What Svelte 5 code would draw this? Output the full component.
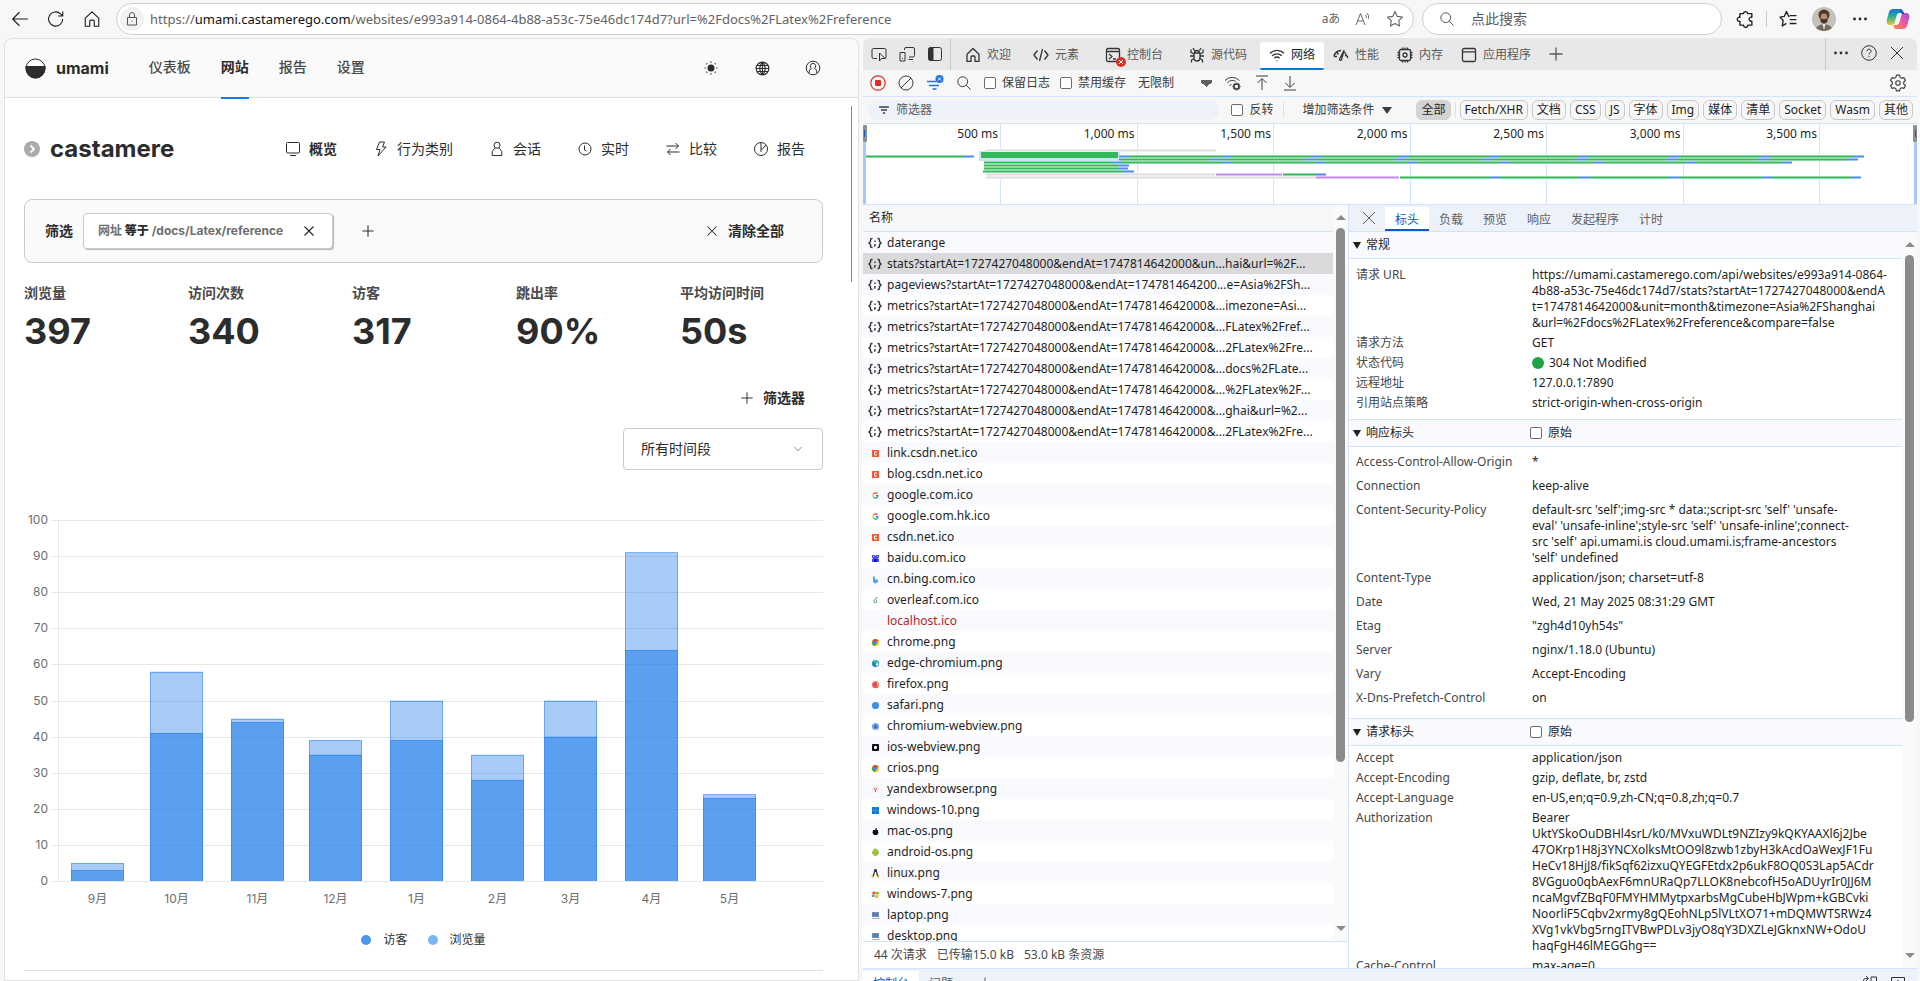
<script lang="ts">
  interface HeaderRow {
    name: string;
    value: string;
    ok?: boolean;
  }

  interface RequestRow {
    name: string;
    icon: string;
  }

  // Stroke icons, all drawn on a 16x16 grid.
  const icons: Record<string, string[]> = {
    back: ['M15 8H1.5M7.5 2 1.5 8l6 6'],
    reload: ['M14 8a6.3 6.3 0 1 1-2-4.6L14 5.3M14 1.3v4h-4'],
    home: ['M2 7.2 8 1.6l6 5.6v7.2h-4V10a1 1 0 0 0-1-1H7a1 1 0 0 0-1 1v4.4H2z'],
    lock: ['M3.5 6.5h9v7.5h-9zM5.5 6.5V4a2.5 2.5 0 0 1 5 0v2.5M8 9.7v1'],
    star: ['M8 1.4l2 4.3 4.7.6-3.4 3.2.8 4.7L8 11.9l-4.1 2.3.8-4.7L1.3 6.3 6 5.7z'],
    search: ['M6.7 1.8a4.9 4.9 0 1 0 0 9.8 4.9 4.9 0 0 0 0-9.8zM10.3 10.3l4.3 4.3'],
    puzzle: [
      'M5.8 3.2a1.8 1.8 0 1 1 3.6 0h3.8v3.3a1.8 1.8 0 1 0 0 3.4v3.6H9.6a1.9 1.9 0 1 1-3.8 0H2.6V10a1.8 1.8 0 1 1 0-3.4V3.2z',
    ],
    favs: ['M9 6.2 6.6 1.4 4.7 5.7.9 6.3l2.8 3.1-.8 4.8 3.7-2.3M9.5 5h6M9.5 8.5h6M9.5 12h6'],
    close: ['M2 2l12 12M14 2 2 14'],
    plus: ['M8 1.5v13M1.5 8h13'],
    chevron: ['M3 5l5 5.5L13 5'],
    globe: [
      'M8 1.2a6.8 6.8 0 1 0 0 13.6A6.8 6.8 0 0 0 8 1.2zM8 1.2c-4 4-4 9.6 0 13.6 4-4 4-9.6 0-13.6zM1.2 8h13.6M2 4.8h12M2 11.2h12M8 1.2v13.6',
    ],
    user: [
      'M8 1.2a6.8 6.8 0 1 0 0 13.6A6.8 6.8 0 0 0 8 1.2z',
      'M8 3.4a2.7 2.7 0 0 0-1.4 5C4.8 9 4.2 10.5 4 13M8 3.4a2.7 2.7 0 0 1 1.4 5c1.8.6 2.4 2.1 2.6 4.6',
    ],
    monitor: ['M2.5 1.5h11a1 1 0 0 1 1 1V11a1 1 0 0 1-1 1h-11a1 1 0 0 1-1-1V2.5a1 1 0 0 1 1-1zM5 14.5h6'],
    bolt: ['M6.5 1h5l-2 5H13L5 15l2-6.5H3.5z'],
    person: ['M8 1.2a3 3 0 1 0 0 6 3 3 0 0 0 0-6zM6 7l-2.8 3.5v4h9.6v-4L10 7'],
    clock: ['M8 2a6 6 0 1 0 0 12A6 6 0 0 0 8 2zM7.5 4.5V9l2 1'],
    swap: ['M1.5 5h12M10.5 2l3 3-3 3M14.5 11h-12M5.5 8l-3 3 3 3'],
    pie: ['M8 1.5a6.5 6.5 0 1 0 0 13 6.5 6.5 0 0 0 0-13zM8 1.5V8h1.5L13 4M8 8v3'],
    inspect: [
      'M6 12.5H2.5A1.5 1.5 0 0 1 1 11V4a1.5 1.5 0 0 1 1.5-1.5h11A1.5 1.5 0 0 1 15 4v7a1.5 1.5 0 0 1-1.5 1.5',
      'M8.5 7v8l2-2.5H14z',
    ],
    devices: ['M5.5 4V3A1.5 1.5 0 0 1 7 1.5h7A1.5 1.5 0 0 1 15.5 3v6.5A1.5 1.5 0 0 1 14 11h-4M1 6.5h5V15H1zM3 12.5h1M9.5 13.5H14'],
    code: ['M4.500 3.500 1 8l3.500 4.500M11.500 3.500 15 8l-3.500 4.500M9.500 2l-3 12'],
    console: [
      'M3 1.5h10A1.5 1.5 0 0 1 14.5 3v10a1.5 1.5 0 0 1-1.5 1.5H3A1.5 1.5 0 0 1 1.5 13V3A1.5 1.5 0 0 1 3 1.5zM1.5 4.5h13',
      'M4 7l3 2.5L4 12M8 12h3',
    ],
    bug: [
      'M5 6h6v5a3 3 0 0 1-6 0zM5.5 6a2.500 2.500 0 0 1 5 0M5.500 3.500 4 1M10.500 3.500 12 1',
      'M5 9H1M11 9h4M5 7 2 5.500v-3M11 7l3-1.500v-3M5 11.500 2.500 13v2.500M11 11.500l2.500 1.500v2.500',
    ],
    wifi: ['M1 6.3a10 10 0 0 1 14 0M3.200 8.800a7 7 0 0 1 9.600 0M5.400 11.200a3.800 3.800 0 0 1 5.200 0M8 13.500v.8'],
    gauge: ['M1 9.500A7.500 7.500 0 0 1 8 3.500M11.500 5l3.500 6M1 9.500h3M6.500 12 11 3.500l-2.500 9a1 1 0 0 1-2-.5zM4 5.500l1.500 2M12 8.500l3 1'],
    chip: [
      'M4 2.5h8A1.5 1.5 0 0 1 13.5 4v8a1.5 1.5 0 0 1-1.5 1.5H4A1.5 1.5 0 0 1 2.5 12V4A1.5 1.5 0 0 1 4 2.5zM8 6a2 2 0 1 0 0 4 2 2 0 0 0 0-4z',
      'M5.5.5v2M8 .5v2M10.5.5v2M5.5 13.5v2M8 13.5v2M10.5 13.5v2M.5 5.5h2M.5 8h2M.5 10.5h2M13.5 5.5h2M13.5 8h2M13.5 10.5h2',
    ],
    window: ['M3 1.5h10A1.5 1.5 0 0 1 14.5 3v10a1.5 1.5 0 0 1-1.5 1.5H3A1.5 1.5 0 0 1 1.5 13V3A1.5 1.5 0 0 1 3 1.5zM1.5 4.8h13'],
    clear: ['M8 1a7 7 0 1 0 0 14A7 7 0 0 0 8 1zM13 3 3 13'],
    upload: ['M2 1h12M8 15V4M3.5 8 8 3.5 12.5 8'],
    download: ['M2 15h12M8 1v11M3.5 8 8 12.5 12.5 8'],
    funnel: ['M1.5 4h13M4 8h8M6.5 12h3'],
    gear: [
      'M6.6 1h2.8l.5 2 1.3.8 2-.6 1.4 2.4-1.5 1.5v1.8l1.5 1.5-1.4 2.4-2-.6-1.3.8-.5 2H6.6l-.5-2-1.3-.8-2 .6-1.4-2.4 1.5-1.500V7.100L1.400 5.600l1.400-2.400 2 .6L6.100 3z',
      'M8 6a2 2 0 1 0 0 4 2 2 0 0 0 0-4z',
    ],
    dock: ['M1.5 9V5.500a2 2 0 0 1 2-2H6M4 1l2.500 2.500L4 6', 'M9 2v12h5.500V2z'],
    expand: ['M1.5 2.5h13v12h-13zM8 11V5.5M5.5 8 8 5.5 10.5 8'],
  };

  const siteNav = ['仪表板', '网站', '报告', '设置'];
  const siteTabs = [
    { icon: 'monitor', label: '概览' },
    { icon: 'bolt', label: '行为类别' },
    { icon: 'person', label: '会话' },
    { icon: 'clock', label: '实时' },
    { icon: 'swap', label: '比较' },
    { icon: 'pie', label: '报告' },
  ];
  const metrics = [
    { label: '浏览量', value: '397' },
    { label: '访问次数', value: '340' },
    { label: '访客', value: '317' },
    { label: '跳出率', value: '90%' },
    { label: '平均访问时间', value: '50s' },
  ];

  // Bars sit on a time axis, so months are not evenly spaced.
  const months = [
    { label: '9月', x: 47, visitors: 3, views: 5 },
    { label: '10月', x: 126, visitors: 41, views: 58 },
    { label: '11月', x: 207, visitors: 44, views: 45 },
    { label: '12月', x: 285, visitors: 35, views: 39 },
    { label: '1月', x: 366, visitors: 39, views: 50 },
    { label: '2月', x: 447, visitors: 28, views: 35 },
    { label: '3月', x: 520, visitors: 40, views: 50 },
    { label: '4月', x: 601, visitors: 64, views: 91 },
    { label: '5月', x: 679, visitors: 23, views: 24 },
  ];
  const ticks = [0, 10, 20, 30, 40, 50, 60, 70, 80, 90, 100];
  const BAR_W = 53;
  const BASE = 373;
  const yOf = (v: number) => BASE - v * 3.61;

  const devTabs = [
    { icon: 'home', label: '欢迎', wide: false },
    { icon: 'code', label: '元素', wide: true },
    { icon: 'console', label: '控制台', wide: true },
    { icon: 'bug', label: '源代码', wide: true },
    { icon: 'wifi', label: '网络', wide: false },
    { icon: 'gauge', label: '性能', wide: false },
    { icon: 'chip', label: '内存', wide: false },
    { icon: 'window', label: '应用程序', wide: false },
  ];
  const types = ['Fetch/XHR', '文档', 'CSS', 'JS', '字体', 'Img', '媒体', '清单', 'Socket', 'Wasm', '其他'];

  const marks = [500, 1000, 1500, 2000, 2500, 3000, 3500].map((ms, i) => ({
    x: 137 + i * 136.5,
    label: `${ms.toLocaleString('en-US')} ms`,
  }));

  // [core, halo] colour of each activity kind
  const GREEN = ['#34b95a', '#8fd9a4'];
  const BLUE = ['#4d8bf0', '#a3c4fa'];
  const VIOLET = ['#c58af9', '#e0c0fc'];
  const GREY = ['#dedede', '#ededed'];

  type Span = [number, number, number, string[]];

  // One connection lane: green run, with blue download pieces in it.
  function lane(y: number, from: number, blues: number[], width = 10): Span[] {
    const end = blues[blues.length - 1] + width;
    return [[y, from, end, GREEN], ...blues.map((b): Span => [y, b, b + width, BLUE])];
  }

  const spans: Span[] = [
    ...lane(32, 2, [101]),
    [26, 122, 353, GREY],
    ...lane(32, 256, [256, 359, 448, 536, 627, 716, 807, 898, 991]),
    ...lane(35, 256, [347, 441, 530, 619, 712, 803, 894, 985]),
    ...lane(38, 121, [249, 359, 453, 544, 636, 730, 822, 919]),
    ...lane(41, 121, [256]),
    ...lane(44, 121, [255]),
    ...lane(47, 120, [261]),
    [50, 123, 352, GREY],
    [50, 353, 419, VIOLET],
    [50, 420, 453, GREEN],
    [50, 453, 463, BLUE],
    [53, 123, 453, GREY],
    [53, 453, 536, VIOLET],
    ...lane(53, 537, [627, 716, 807, 898, 988]),
  ];

  const requests: RequestRow[] = [
    { name: 'daterange', icon: 'json' },
    { name: 'stats?startAt=1727427048000&endAt=1747814642000&un...hai&url=%2F...', icon: 'json' },
    { name: 'pageviews?startAt=1727427048000&endAt=174781464200...e=Asia%2FSh...', icon: 'json' },
    { name: 'metrics?startAt=1727427048000&endAt=1747814642000&...imezone=Asi...', icon: 'json' },
    { name: 'metrics?startAt=1727427048000&endAt=1747814642000&...FLatex%2Fref...', icon: 'json' },
    { name: 'metrics?startAt=1727427048000&endAt=1747814642000&...2FLatex%2Fre...', icon: 'json' },
    { name: 'metrics?startAt=1727427048000&endAt=1747814642000&...docs%2FLate...', icon: 'json' },
    { name: 'metrics?startAt=1727427048000&endAt=1747814642000&...%2FLatex%2F...', icon: 'json' },
    { name: 'metrics?startAt=1727427048000&endAt=1747814642000&...ghai&url=%2...', icon: 'json' },
    { name: 'metrics?startAt=1727427048000&endAt=1747814642000&...2FLatex%2Fre...', icon: 'json' },
    { name: 'link.csdn.net.ico', icon: 'csdn' },
    { name: 'blog.csdn.net.ico', icon: 'csdn' },
    { name: 'google.com.ico', icon: 'google' },
    { name: 'google.com.hk.ico', icon: 'google' },
    { name: 'csdn.net.ico', icon: 'csdn' },
    { name: 'baidu.com.ico', icon: 'baidu' },
    { name: 'cn.bing.com.ico', icon: 'bing' },
    { name: 'overleaf.com.ico', icon: 'overleaf' },
    { name: 'localhost.ico', icon: 'failed' },
    { name: 'chrome.png', icon: 'chrome' },
    { name: 'edge-chromium.png', icon: 'edge' },
    { name: 'firefox.png', icon: 'firefox' },
    { name: 'safari.png', icon: 'safari' },
    { name: 'chromium-webview.png', icon: 'chromium' },
    { name: 'ios-webview.png', icon: 'ios' },
    { name: 'crios.png', icon: 'chrome' },
    { name: 'yandexbrowser.png', icon: 'yandex' },
    { name: 'windows-10.png', icon: 'win10' },
    { name: 'mac-os.png', icon: 'mac' },
    { name: 'android-os.png', icon: 'android' },
    { name: 'linux.png', icon: 'linux' },
    { name: 'windows-7.png', icon: 'win7' },
    { name: 'laptop.png', icon: 'screen' },
    { name: 'desktop.png', icon: 'screen' },
  ];

  const general: HeaderRow[] = [
    {
      name: '请求 URL',
      value:
        'https://umami.castamerego.com/api/websites/e993a914-0864-\n4b88-a53c-75e46dc174d7/stats?startAt=1727427048000&endA\nt=1747814642000&unit=month&timezone=Asia%2FShanghai\n&url=%2Fdocs%2FLatex%2Freference&compare=false',
    },
    { name: '请求方法', value: 'GET' },
    { name: '状态代码', value: '304 Not Modified', ok: true },
    { name: '远程地址', value: '127.0.0.1:7890' },
    { name: '引用站点策略', value: 'strict-origin-when-cross-origin' },
  ];
  const response: HeaderRow[] = [
    { name: 'Access-Control-Allow-Origin', value: '*' },
    { name: 'Connection', value: 'keep-alive' },
    {
      name: 'Content-Security-Policy',
      value:
        "default-src 'self';img-src * data:;script-src 'self' 'unsafe-\neval' 'unsafe-inline';style-src 'self' 'unsafe-inline';connect-\nsrc 'self' api.umami.is cloud.umami.is;frame-ancestors\n'self' undefined",
    },
    { name: 'Content-Type', value: 'application/json; charset=utf-8' },
    { name: 'Date', value: 'Wed, 21 May 2025 08:31:29 GMT' },
    { name: 'Etag', value: '"zgh4d10yh54s"' },
    { name: 'Server', value: 'nginx/1.18.0 (Ubuntu)' },
    { name: 'Vary', value: 'Accept-Encoding' },
    { name: 'X-Dns-Prefetch-Control', value: 'on' },
  ];
  const request: HeaderRow[] = [
    { name: 'Accept', value: 'application/json' },
    { name: 'Accept-Encoding', value: 'gzip, deflate, br, zstd' },
    { name: 'Accept-Language', value: 'en-US,en;q=0.9,zh-CN;q=0.8,zh;q=0.7' },
    {
      name: 'Authorization',
      value:
        'Bearer\nUktYSkoOuDBHl4srL/k0/MVxuWDLt9NZIzy9kQKYAAXl6j2Jbe\n47OKrp1H8j3YNCXolksMtOO9l8zwb1zbyH3kAcdOaWexJF1Fu\nHeCv18HjJ8/fikSqf62izxuQYEGFEtdx2p6ukF8OQ0S3Lap5ACdr\n8VGguo0qbAexF6mnURaQp7LLOK8nebcofH5oADUyrIr0JJ6M\nncaMgvfZBqF0FMYHMMytpxarbsMgCubeHbJWpm+kGBCvki\nNoorliF5Cqbv2xrmy8gQEohNLp5lVLtXO71+mDQMWTSRWz4\nXVg1vkVbg5rngITVBwPDLv3jyO8qY3DXZLeJGknxNW+OdoU\nhaqFgH46lMEGGhg==',
    },
    { name: 'Cache-Control', value: 'max-age=0' },
  ];
  const sections = [
    { title: '常规', rows: general, raw: false, kind: 'general' },
    { title: '响应标头', rows: response, raw: true, kind: 'response' },
    { title: '请求标头', rows: request, raw: true, kind: 'request' },
  ];
  const detailTabs = ['标头', '负载', '预览', '响应', '发起程序', '计时'];

  let selected = $state(1);
  let range = $state('all');
</script>

{#snippet icon(name: string, size = 16, weight = 1)}
  <svg class="icon" width={size} height={size} viewBox="0 0 16 16" stroke-width={weight} aria-hidden="true">
    {#each icons[name] as d (d)}
      <path {d}></path>
    {/each}
  </svg>
{/snippet}

{#snippet dots()}
  <svg width="16" height="16" viewBox="0 0 16 16" fill="currentColor" aria-hidden="true">
    <circle cx="2.5" cy="8" r="1.4"></circle>
    <circle cx="8" cy="8" r="1.4"></circle>
    <circle cx="13.5" cy="8" r="1.4"></circle>
  </svg>
{/snippet}

{#snippet fileIcon(kind: string)}
  <svg class="file" width="14" height="14" viewBox="0 0 14 14" aria-hidden="true">
    {#if kind === 'json'}
      <g fill="none" stroke="#333" stroke-width="1.4">
        <path d="M4.5 2.500h-.7q-1.300 0-1.300 1.500v1.500L1 7l1.500 1.500V10q0 1.500 1.300 1.500h.7M9.500 2.500h.7q1.300 0 1.300 1.500v1.500L13 7l-1.500 1.500V10q0 1.500-1.300 1.500h-.7"></path>
        <path d="M7 4.500V6M7 8v1.500l-.7 1.200"></path>
      </g>
    {:else if kind === 'csdn'}
      <rect x="4" y="4" width="7" height="7" fill="#fc5531"></rect>
      <path d="M9 6H6.500v3H9" fill="none" stroke="#fff"></path>
    {:else if kind === 'google'}
      <g fill="none" stroke-width="1.300">
        <path d="M9.500 5.700A2.500 2.500 0 0 0 5.500 6" stroke="#ea4335"></path>
        <path d="M5.500 6a2.500 2.500 0 0 0 0 3" stroke="#fbbc05"></path>
        <path d="M5.500 9A2.500 2.500 0 0 0 9 9.600" stroke="#34a853"></path>
        <path d="M9 9.600a2.500 2.500 0 0 0 1-2H7.700" stroke="#4285f4"></path>
      </g>
    {:else if kind === 'baidu'}
      <rect x="4" y="4" width="7" height="7" fill="#4a4af7"></rect>
      <path d="M5 5h1v1H5zM9 5h1v1H9zM7 4h1v1H7zM4 7h1v1H4zM10 7h1v1h-1z" fill="#c9c9ff"></path>
      <path d="M6 8h3v3H6z" fill="#1616c8"></path>
    {:else if kind === 'bing'}
      <path d="M5 4l2 1v2l3 1v2l-3 1.5L5 10z" fill="#4ba5e8"></path>
    {:else if kind === 'overleaf'}
      <path d="M9.500 4.500q-2 0-2.300 2M7.500 6.800a1.500 1.500 0 1 0 1.300 1.500q0-1-1-1.500" fill="none" stroke="#5f9b76"></path>
    {:else if kind === 'chrome'}
      <circle cx="7.5" cy="7.5" r="3.5" fill="#fbc116"></circle>
      <path d="M7.500 7.500 4.300 6a3.500 3.500 0 0 1 6.200-.3z" fill="#e33b2e"></path>
      <path d="M7.500 7.500 4.300 6a3.500 3.500 0 0 0 3.200 5z" fill="#2da94f"></path>
      <circle cx="7.5" cy="7.5" r="1.5" fill="#4285f4"></circle>
    {:else if kind === 'edge'}
      <circle cx="7.5" cy="7.5" r="3.5" fill="#1584cf"></circle>
      <path d="M5 5a3.500 3.500 0 0 1 6 2.500H8z" fill="#44c98a"></path>
      <circle cx="9" cy="8.5" r="1.2" fill="#fff"></circle>
    {:else if kind === 'firefox'}
      <circle cx="7.5" cy="7.7" r="3.5" fill="#ff5a4a"></circle>
      <path d="M9 4l2 2.500v2L9 9z" fill="#ffb52e"></path>
      <circle cx="7.500" cy="7.500" r="1.300" fill="#8f43d6"></circle>
    {:else if kind === 'safari'}
      <circle cx="7.5" cy="7.5" r="3.5" fill="#2f8de4"></circle>
      <circle cx="7.5" cy="7.5" r="2" fill="#4a90dd"></circle>
    {:else if kind === 'chromium'}
      <circle cx="7.5" cy="7.5" r="3.5" fill="#6ba0ef"></circle>
      <circle cx="7.5" cy="7.5" r="1.5" fill="#2f66c5"></circle>
    {:else if kind === 'ios'}
      <rect x="4" y="4" width="7" height="7" rx="1" fill="#111"></rect>
      <rect x="6" y="6" width="3" height="3" rx="1" fill="#fff"></rect>
    {:else if kind === 'yandex'}
      <circle cx="7.5" cy="7.5" r="3.5" fill="#f3eeee"></circle>
      <path d="M6 6l1.500 2L9 6M7.500 8v2" fill="none" stroke="#e05252"></path>
    {:else if kind === 'win10'}
      <path d="M4 4h7v7H4z" fill="#0a7bd6"></path>
      <path d="M7.500 4v7M4 7.500h7" stroke="#5aa9e6" stroke-width=".5"></path>
    {:else if kind === 'mac'}
      <path d="M5 6h2l1-2h1l-.5 2H10v1.500l.5 1.500L9 11H6L4.500 9z" fill="#111"></path>
    {:else if kind === 'android'}
      <path d="M5 6a2.500 2.500 0 0 1 5 0l1 .5v2l-1 1L8.500 11h-2L5 9.500l-1-1v-2z" fill="#9bc24a"></path>
    {:else if kind === 'linux'}
      <path d="M6.500 3h2l1 4 1 3h-6l1-3z" fill="#333"></path>
      <path d="M7 6h1l1 4H6z" fill="#fff"></path>
      <path d="M4 9.500 6 11H4zM11 9.500 9 11h2z" fill="#e8b33c" stroke="#e8b33c"></path>
    {:else if kind === 'win7'}
      <path d="M5 4.500h2.500V7H4z" fill="#f0552b"></path>
      <path d="M8 5h3l-.5 2.500h-3z" fill="#80bb2d"></path>
      <path d="M4 7.500h3L6.500 10H4z" fill="#33a3e8"></path>
      <path d="M7.500 8h3L10 11H7z" fill="#f7bc1e"></path>
    {:else if kind === 'screen'}
      <rect x="4.500" y="4.500" width="6" height="4" fill="#4b7fd6" stroke="#7d8aa5"></rect>
      <path d="M4 10.500h7" stroke="#aab" fill="none"></path>
    {/if}
  </svg>
{/snippet}

<div class="browser">
  <header class="chrome">
    <button class="tool" aria-label="返回">{@render icon('back', 18)}</button>
    <button class="tool" aria-label="刷新">{@render icon('reload', 18)}</button>
    <button class="tool" aria-label="主页">{@render icon('home', 18)}</button>
    <div class="address">
      <span class="lock">{@render icon('lock')}</span>
      <div class="url" role="textbox" tabindex="0" aria-label="地址栏">
        https://<b>umami.castamerego.com</b>/websites/e993a914-0864-4b88-a53c-75e46dc174d7?url=%2Fdocs%2FLatex%2Freference
      </div>
      <button class="mini translate" aria-label="翻译">aあ</button>
      <button class="mini" aria-label="大声朗读">
        <svg class="icon" width="16" height="16" viewBox="0 0 16 16" aria-hidden="true">
          <path d="M1 14 5.500 2.500 10 14M2.700 10h5.600M10.500 4a3 3 0 0 1 .8 3M12 2a6 6 0 0 1 1.500 5.500"></path>
        </svg>
      </button>
      <button class="mini" aria-label="收藏">{@render icon('star', 18)}</button>
    </div>
    <label class="search">
      {@render icon('search')}
      <input type="search" placeholder="点此搜索" aria-label="点此搜索" />
    </label>
    <div class="extras">
      <button class="tool" aria-label="扩展">{@render icon('puzzle', 18, 1.2)}</button>
      <span class="rule"></span>
      <button class="tool" aria-label="收藏夹">{@render icon('favs', 18, 1.2)}</button>
      <button class="tool" aria-label="个人资料">
        <svg width="24" height="24" viewBox="0 0 24 24" aria-hidden="true">
          <circle cx="12" cy="12" r="12" fill="#c3c1b9"></circle>
          <path d="M4 21a9 7 0 0 1 16 0A12 12 0 0 1 4 21z" fill="#756d5e"></path>
          <path d="M10 15l2 8 2-8z" fill="#ece8df"></path>
          <circle cx="12" cy="8" r="5.5" fill="#4c382c"></circle>
          <ellipse cx="12" cy="10.5" rx="3.4" ry="4" fill="#b98a72"></ellipse>
          <path d="M8.500 11.500q3.500 1.500 7 0v3q-3.500 4.500-7 0z" fill="#48352a"></path>
        </svg>
      </button>
      <button class="tool" aria-label="更多">{@render dots()}</button>
      <button class="tool" aria-label="Copilot">
        <svg width="24" height="24" viewBox="0 0 24 24" aria-hidden="true">
          <defs>
            <linearGradient id="cop-a" x1="0" y1="0" x2="0" y2="1">
              <stop offset="0" stop-color="#1673e0"></stop>
              <stop offset=".5" stop-color="#2bb38c"></stop>
              <stop offset="1" stop-color="#f2c62b"></stop>
            </linearGradient>
            <linearGradient id="cop-b" x1="1" y1="0" x2="0" y2="1">
              <stop offset="0" stop-color="#9b4ef0"></stop>
              <stop offset=".5" stop-color="#ee5a9c"></stop>
              <stop offset="1" stop-color="#fb8a36"></stop>
            </linearGradient>
          </defs>
          <path d="M7.500 2H14c2 0 2 2 2.500 4h-3c-2 0-2.500 1.500-3 3l-2 7c-.5 1.500-1 2-2.500 2H4c-3 0-4-2.500-3-6l2-7c.7-2 2-3 4.500-3z" fill="url(#cop-a)"></path>
          <path d="M16.500 22H10c-2 0-2-2-2.500-4h3c2 0 2.500-1.500 3-3l2-7c.5-1.500 1-2 2.500-2h2c3 0 4 2.500 3 6l-2 7c-.7 2-2 3-4.500 3z" fill="url(#cop-b)"></path>
          <path d="M14 3c1.700 0 2 1.300 2.500 3H18" fill="none" stroke="#1752b8" stroke-width="2"></path>
        </svg>
      </button>
    </div>
  </header>

  <div class="panes">
    <main class="site">
      <nav class="site-nav">
        <a class="brand" href="/">
          <svg width="21" height="21" viewBox="0 0 21 21" aria-hidden="true">
            <circle cx="10.5" cy="10.5" r="9.500" fill="#fff" stroke="#2c2c2c"></circle>
            <path d="M.5 8h20v2.500a10 10 0 0 1-20 0z" fill="#2c2c2c"></path>
          </svg>
          umami
        </a>
        <div class="links">
          {#each siteNav as label (label)}
            <a href="/" class:active={label === '网站'}>{label}</a>
          {/each}
        </div>
        <div class="site-tools">
          <button aria-label="主题">
            <svg width="14" height="14" viewBox="0 0 16 16" aria-hidden="true">
              <circle cx="8" cy="8" r="4" fill="#2c2c2c"></circle>
              <path
                d="M8 .5V2M8 14v1.500M.5 8H2M14 8h1.500M2.700 2.700l1 1M12.300 12.300l1 1M13.300 2.700l-1 1M3.700 12.300l-1 1"
                stroke="#2c2c2c"
                stroke-width="1.400"
              ></path>
            </svg>
          </button>
          <button aria-label="语言">{@render icon('globe', 15, 1.2)}</button>
          <button aria-label="账户">{@render icon('user', 16)}</button>
        </div>
      </nav>

      <div class="site-body">
        <div class="site-head">
          <svg width="16" height="16" viewBox="0 0 16 16" aria-hidden="true">
            <circle cx="8" cy="8" r="8" fill="#ababab"></circle>
            <path d="M6.500 4.500 10 8l-3.500 3.500" fill="none" stroke="#fff" stroke-width="1.800"></path>
          </svg>
          <h1>castamere</h1>
          <div class="site-tabs">
            {#each siteTabs as tab, i (tab.icon)}
              <a href="/" class:active={i === 0}>{@render icon(tab.icon)}{tab.label}</a>
            {/each}
          </div>
        </div>

        <div class="filters">
          <span>筛选</span>
          <div class="tag">
            <span>网址 <b>等于</b> /docs/Latex/reference</span>
            <button aria-label="移除">{@render icon('close', 12, 1.6)}</button>
          </div>
          <button class="add" aria-label="添加筛选">{@render icon('plus', 14, 1.2)}</button>
          <button class="clear">{@render icon('close', 12, 1.4)}清除全部</button>
        </div>

        <dl class="metrics">
          {#each metrics as m (m.label)}
            <div>
              <dt>{m.label}</dt>
              <dd>{m.value}</dd>
            </div>
          {/each}
        </dl>

        <div class="controls">
          <button class="filter-btn">{@render icon('plus', 14, 1.1)}筛选器</button>
          <div class="range">
            <select bind:value={range} aria-label="时间范围">
              <option value="all">所有时间段</option>
              <option value="day">今天</option>
            </select>
            {@render icon('chevron', 12, 1.3)}
          </div>
        </div>

        <svg class="chart" viewBox="0 0 799 400" role="img" aria-label="访客与浏览量">
          {#each ticks as t (t)}
            <line x1="27" x2="799" y1={Math.round(yOf(t)) + 0.5} y2={Math.round(yOf(t)) + 0.5} class="grid"></line>
            <text x="24" y={yOf(t) + 4} text-anchor="end">{t}</text>
          {/each}
          <line x1="34.5" x2="34.5" y1="12" y2={BASE} class="grid"></line>
          {#each months as m (m.label)}
            <rect x={m.x} y={yOf(m.views)} width={BAR_W} height={BASE - yOf(m.views)} class="views"></rect>
            <rect x={m.x} y={yOf(m.visitors)} width={BAR_W} height={BASE - yOf(m.visitors)} class="visitors"></rect>
            <path
              class="edge"
              d="M{m.x + 0.5} {BASE}V{Math.round(yOf(m.views)) + 0.5}h{BAR_W - 1}V{BASE}M{m.x} {Math.round(yOf(m.visitors)) + 0.5}h{BAR_W}"
            ></path>
            <text x={m.x + BAR_W / 2} y="395" text-anchor="middle">{m.label}</text>
          {/each}
        </svg>

        <ul class="legend">
          <li><i class="dot dark"></i>访客</li>
          <li><i class="dot"></i>浏览量</li>
        </ul>
      </div>
      <span class="site-scroll"></span>
    </main>

    <aside class="devtools">
      <div class="dev-tabs">
        <div class="dev-modes">
          <button aria-label="选择元素">{@render icon('inspect')}</button>
          <button aria-label="设备模拟">{@render icon('devices')}</button>
          <button aria-label="停靠">
            <svg class="icon" width="16" height="16" viewBox="0 0 16 16" aria-hidden="true">
              <rect x="1.5" y="1.5" width="13" height="13" rx="2"></rect>
              <path d="M2 2h4v12H2z" fill="currentColor"></path>
            </svg>
          </button>
        </div>
        {#each devTabs as tab (tab.icon)}
          <button class="dev-tab" class:wide={tab.wide} class:active={tab.icon === 'wifi'}>
            <span class="tab-icon">
              {@render icon(tab.icon, 16, 1.3)}
              {#if tab.icon === 'console'}
                <svg class="badge" width="10" height="10" viewBox="0 0 10 10" aria-hidden="true">
                  <circle cx="5" cy="5" r="5" fill="#d9302a"></circle>
                  <path d="M3 3l4 4M7 3 3 7" stroke="#fff"></path>
                </svg>
              {/if}
            </span>
            {tab.label}
          </button>
        {/each}
        <button class="more" aria-label="更多工具">{@render icon('plus', 16, 1.3)}</button>
        <div class="dev-end">
          <button aria-label="自定义">{@render dots()}</button>
          <button aria-label="帮助">
            <svg class="icon" width="16" height="16" viewBox="0 0 16 16" aria-hidden="true">
              <circle cx="8" cy="8" r="7.300"></circle>
              <path d="M6 6.200a2 2 0 1 1 3 1.700c-.7.5-1 .8-1 1.600M8 11v1.200"></path>
            </svg>
          </button>
          <button aria-label="关闭">{@render icon('close')}</button>
        </div>
      </div>

      <div class="toolbar">
        <button aria-label="停止录制">
          <svg width="16" height="16" viewBox="0 0 16 16" aria-hidden="true">
            <circle cx="8" cy="8" r="7.2" fill="none" stroke="#d9302a" stroke-width="1.200"></circle>
            <rect x="5" y="5" width="6" height="6" rx="1" fill="#d9302a"></rect>
          </svg>
        </button>
        <button aria-label="清除">{@render icon('clear')}</button>
        <button aria-label="筛选">
          <svg width="18" height="16" viewBox="0 0 18 16" aria-hidden="true">
            <path d="M1 6.500h9M3 10.500h10M6.500 14h4" stroke="#1a73e8" stroke-width="1.300"></path>
            <circle cx="13.5" cy="4" r="4" fill="#1a73e8"></circle>
            <path d="M12 2.500l3 3M15 2.500l-3 3" stroke="#fff"></path>
          </svg>
        </button>
        <button aria-label="搜索">{@render icon('search')}</button>
        <label><input type="checkbox" />保留日志</label>
        <label class="next"><input type="checkbox" />禁用缓存</label>
        <select class="throttle" aria-label="网络限制">
          <option>无限制</option>
        </select>
        <button aria-label="网络条件">
          <svg class="icon" width="18" height="16" viewBox="0 0 18 16" aria-hidden="true">
            <path d="M1 5.500a10 10 0 0 1 14.500 0M3.500 8a6.500 6.500 0 0 1 8-1.800M5.500 10.500l2-1"></path>
            <circle cx="12.500" cy="11.500" r="2.500" stroke-width="1.600"></circle>
            <path d="M12.500 7.500v1M12.500 14.500v1M8.500 11.500h1M15.500 11.500h1M9.700 8.700l1 1M14.300 13.300l1 1M15.300 8.700l-1 1M10.700 13.300l-1 1" stroke-width="1.600"></path>
          </svg>
        </button>
        <button class="io" aria-label="导入">{@render icon('upload')}</button>
        <button class="io" aria-label="导出">{@render icon('download')}</button>
        <button class="settings" aria-label="设置">{@render icon('gear', 18)}</button>
      </div>

      <div class="filter-row">
        <label class="filter-box">
          {@render icon('funnel', 12, 1.8)}
          <input type="text" placeholder="筛选器" aria-label="筛选器" />
        </label>
        <label class="invert"><input type="checkbox" />反转</label>
        <span class="rule"></span>
        <button class="more-filters">增加筛选条件<i></i></button>
        <button class="pill on">全部</button>
        <span class="rule"></span>
        {#each types as t (t)}
          <button class="pill">{t}</button>
        {/each}
      </div>

      <svg class="timeline" viewBox="0 0 1054 80" role="img" aria-label="网络活动时间线">
        {#each marks as m (m.label)}
          <line x1={Math.round(m.x) + 0.5} x2={Math.round(m.x) + 0.5} y1="0" y2="80" stroke="#d3e3fd"></line>
          <text x={m.x - 2} y="14" text-anchor="end">{m.label}</text>
        {/each}
        <rect x="116" y="27" width="141" height="10" fill="#d3e0f8"></rect>
        {#each spans as [y, from, to, colour], i (i)}
          <rect x={from} y={y - 1} width={to - from} height="3" fill={colour[1]}></rect>
          <rect x={from} {y} width={to - from} height="1" fill={colour[0]}></rect>
        {/each}
        <rect x="118" y="28" width="137" height="6" fill={GREEN[0]}></rect>
        <path d="M1.500 18V80M1052.500 18V80" stroke="#a8c7fa" stroke-width="3"></path>
        <rect x="0" y="1" width="4" height="17" rx="1" fill="#8f8f8f"></rect>
        <rect x="1050" y="1" width="4" height="17" rx="1" fill="#8f8f8f"></rect>
        <path d="M1.500 6v7M1052.500 6v7" stroke="#0b57d0"></path>
      </svg>

      <div class="split">
        <section class="requests">
          <div class="scroll-area">
            <table>
              <thead>
                <tr><th>名称</th></tr>
              </thead>
              <tbody>
                {#each requests as r, i (i)}
                  <tr class:selected={i === selected} class:failed={r.icon === 'failed'} onclick={() => (selected = i)}>
                    <td>{@render fileIcon(r.icon)}{r.name}</td>
                  </tr>
                {/each}
              </tbody>
            </table>
            <div class="bar">
              <i class="up"></i>
              <span class="thumb"></span>
              <i class="down"></i>
            </div>
          </div>
          <footer>
            <span>44 次请求</span>
            <span>已传输15.0 kB</span>
            <span>53.0 kB 条资源</span>
          </footer>
        </section>

        <section class="details">
          <div class="detail-tabs">
            <button class="x" aria-label="关闭详情">{@render icon('close')}</button>
            {#each detailTabs as tab, i (tab)}
              <button class:active={i === 0}>{tab}</button>
            {/each}
          </div>
          <div class="scroll-area">
            <div class="headers">
              {#each sections as s (s.title)}
                <h2>
                  <i></i><span>{s.title}</span>
                  {#if s.raw}
                    <label><input type="checkbox" />原始</label>
                  {/if}
                </h2>
                <dl class={s.kind}>
                  {#each s.rows as row (row.name)}
                    <div>
                      <dt>{row.name}</dt>
                      <dd>{#if row.ok}<i class="ok"></i>{/if}{row.value}</dd>
                    </div>
                  {/each}
                </dl>
              {/each}
            </div>
            <div class="bar">
              <i class="up"></i>
              <span class="thumb"></span>
              <i class="down"></i>
            </div>
          </div>
        </section>
      </div>

      <div class="drawer">
        <button class="active">控制台</button>
        <button>问题</button>
        <button class="add-tool" aria-label="更多工具">{@render icon('plus')}</button>
        <div class="drawer-end">
          {@render icon('dock')}
          {@render icon('expand')}
        </div>
      </div>
    </aside>
  </div>
</div>

<style>
  :global(body) {
    margin: 0;
    overflow: hidden;
  }

  .browser {
    --line: #d3e3fd;
    height: 100vh;
    display: flex;
    flex-direction: column;
    background: #f7f7f7;
    color: #1f1f1f;
    font: 12px/16px 'Noto Sans', 'Noto Sans CJK SC', sans-serif;
  }

  button {
    display: inline-flex;
    align-items: center;
    justify-content: center;
    padding: 0;
    border: 0;
    background: none;
    color: inherit;
    font: inherit;
    white-space: nowrap;
  }

  input,
  select {
    margin: 0;
    padding: 0;
    border: 0;
    background: none;
    color: inherit;
    font: inherit;
  }

  input::placeholder {
    color: #5c5c5c;
    opacity: 1;
  }

  input[type='checkbox'] {
    appearance: none;
    box-sizing: border-box;
    width: 12px;
    height: 12px;
    border: 1px solid #6e6e6e;
    border-radius: 2px;
    background: #fff;
  }

  a {
    color: inherit;
    text-decoration: none;
  }

  svg {
    flex: none;
    display: block;
  }

  .icon {
    fill: none;
    stroke: currentColor;
    stroke-linejoin: round;
    overflow: visible;
  }

  dl,
  dd,
  ul {
    margin: 0;
    padding: 0;
    list-style: none;
  }

  /* browser chrome */
  .chrome {
    flex: none;
    height: 38px;
    display: flex;
    align-items: center;
    padding: 0 10px;
    box-sizing: border-box;
  }

  .tool {
    width: 20px;
    margin-right: 16px;
  }

  .address,
  .search {
    box-sizing: border-box;
    height: 32px;
    display: flex;
    align-items: center;
    border: 1px solid #d0d0d0;
    border-radius: 16px;
    background: #fff;
  }

  .address {
    flex: 1;
    min-width: 0;
    margin: 0 8px 0 -2px;
    padding: 0 8px 0 3px;
  }

  .lock {
    width: 24px;
    height: 24px;
    display: flex;
    align-items: center;
    justify-content: center;
    border-radius: 50%;
    background: #f2f2f2;
    color: #555;
  }

  .url {
    flex: 1;
    min-width: 0;
    overflow: hidden;
    margin-left: 6px;
    color: #636363;
    font-size: 13px;
    white-space: nowrap;
  }

  .url b {
    color: #111;
    font-weight: 400;
  }

  .mini {
    width: 20px;
    margin-left: 12px;
    color: #666;
  }

  .translate {
    font-size: 12px;
  }

  .search {
    width: 300px;
    padding: 0 16px;
    gap: 16px;
    color: #555;
    font-size: 14px;
  }

  .search input {
    flex: 1;
    min-width: 0;
    outline: 0;
    appearance: none;
  }

  .extras {
    display: flex;
    align-items: center;
    margin-left: 14px;
    color: #222;
  }

  .extras .tool {
    margin-right: 16px;
  }

  .extras .rule {
    margin: 0 11px 0 -6px;
  }

  .extras .tool:last-child {
    margin: 0 2px 0 2px;
  }

  .rule {
    flex: none;
    width: 1px;
    height: 16px;
    background: #ccc;
  }

  .panes {
    flex: 1;
    min-height: 0;
    display: grid;
    grid-template-columns: 855fr 1054fr;
    gap: 4px;
    padding: 0 3px 0 4px;
  }

  /* analytics site */
  .site {
    position: relative;
    min-width: 0;
    overflow: hidden;
    box-shadow: inset 0 0 0 1px #e2e2e2;
    border-radius: 8px 8px 0 0;
    background: #fff;
    color: #2c2c2c;
    font: 14px/20px Inter, 'Noto Sans CJK SC', sans-serif;
  }

  .site-nav {
    height: 60px;
    display: flex;
    align-items: center;
    padding: 0 37px 0 20px;
    border: 1px solid #e0e0e0;
    border-radius: 8px 8px 0 0;
    box-sizing: border-box;
    background: #fafafa;
  }

  .brand {
    display: flex;
    align-items: center;
    gap: 10px;
    font-size: 16px;
    font-weight: 700;
  }

  .links {
    align-self: stretch;
    display: flex;
    gap: 30px;
    margin-left: 40px;
  }

  .links a {
    height: 40px;
    padding: 8px 0 10px;
    line-height: 40px;
    border-bottom: 2px solid transparent;
    color: #4b4b4b;
    font-weight: 500;
  }

  .links a.active {
    border-color: #147af3;
    color: #2c2c2c;
    font-weight: 700;
  }

  .site-tools {
    display: flex;
    gap: 35px;
    margin-left: auto;
  }

  .site-tools button {
    width: 16px;
  }

  .site-body {
    padding: 0 36px 0 20px;
  }

  .site-head {
    height: 101px;
    display: flex;
    align-items: center;
  }

  .site-head h1 {
    margin: 0 0 0 10px;
    font-size: 24px;
    line-height: 32px;
  }

  .site-tabs {
    display: flex;
    gap: 36px;
    margin-left: auto;
    padding-right: 18px;
  }

  .site-tabs a {
    display: flex;
    align-items: center;
    gap: 8px;
    white-space: nowrap;
  }

  .site-tabs .active {
    font-weight: 700;
  }

  .filters {
    box-sizing: border-box;
    height: 64px;
    display: flex;
    align-items: center;
    padding: 0 38px 0 20px;
    border: 1px solid #cacaca;
    border-radius: 8px;
    background: #fafafa;
    font-weight: 700;
  }

  .tag {
    box-sizing: border-box;
    width: 250px;
    height: 36px;
    display: flex;
    align-items: center;
    justify-content: space-between;
    margin-left: 10px;
    padding: 0 17px 0 14px;
    border: 1px solid #cacaca;
    border-radius: 4px;
    background: #fff;
    box-shadow: 1px 1px 1px #b5b5b5;
    color: #6e6e6e;
    font-size: 12px;
    white-space: nowrap;
  }

  .tag b,
  .tag button {
    color: #2c2c2c;
  }

  .add {
    margin-left: 28px;
  }

  .clear {
    gap: 10px;
    margin-left: auto;
  }

  .metrics {
    display: grid;
    grid-template-columns: repeat(5, 164px);
    padding-top: 20px;
  }

  .metrics dt {
    color: #4b4b4b;
    font-weight: 700;
  }

  .metrics dd {
    margin-top: 4px;
    font-size: 36px;
    font-weight: 700;
    line-height: 48px;
  }

  .controls {
    display: flex;
    flex-direction: column;
    align-items: flex-end;
    padding-top: 33px;
  }

  .filter-btn {
    gap: 9px;
    margin-right: 18px;
    font-weight: 700;
  }

  .range {
    position: relative;
    margin-top: 20px;
  }

  .range select {
    width: 200px;
    height: 42px;
    padding: 0 17px;
    border: 1px solid #cacaca;
    border-radius: 4px;
    background: #fff;
    appearance: none;
  }

  .range :global(svg) {
    position: absolute;
    top: 15px;
    right: 19px;
    color: #8e8e8e;
  }

  .chart {
    width: 100%;
    height: auto;
    margin-top: 38px;
    font-size: 12px;
    fill: #6e6e6e;
  }

  .grid {
    stroke: #e7e7e7;
  }

  .views {
    fill: #2680eb;
    opacity: 0.4;
  }

  .visitors {
    fill: #2680eb;
    opacity: 0.6;
  }

  .edge {
    fill: none;
    stroke: #2680eb;
    opacity: 0.5;
  }

  .legend {
    display: flex;
    justify-content: center;
    gap: 20px;
    padding: 22px 0 20px;
    border-bottom: 1px solid #e0e0e0;
    font-size: 12px;
  }

  .legend li {
    display: flex;
    align-items: center;
    gap: 12px;
  }

  .dot {
    width: 10px;
    height: 10px;
    border-radius: 50%;
    background: #7cb3f3;
  }

  .dot.dark {
    background: #4d96ee;
  }

  .site-scroll {
    position: absolute;
    top: 68px;
    right: 7px;
    width: 1px;
    height: 176px;
    background: #8a8a8a;
  }

  /* devtools */
  .devtools {
    min-width: 0;
    min-height: 0;
    display: flex;
    flex-direction: column;
    overflow: hidden;
    border-radius: 8px 8px 0 0;
    background: #f7f7f7;
  }

  .dev-tabs {
    flex: none;
    height: 32px;
    display: flex;
    align-items: center;
    background: #e8e8e8;
    color: #5a5a5a;
  }

  .dev-modes {
    align-self: stretch;
    display: flex;
    gap: 12px;
    margin-right: 5px;
    padding: 0 7px 0 8px;
    border-right: 1px solid #c8c8c8;
    color: #333;
  }

  .dev-tab {
    box-sizing: border-box;
    height: 28px;
    align-self: flex-end;
    gap: 6px;
    padding: 0 9px;
    border-bottom: 2px solid transparent;
  }

  .dev-tab.wide {
    padding: 0 13px;
  }

  .dev-tab.active {
    border-color: #0b78d4;
    border-radius: 2px;
    background: #fff;
    color: #1f1f1f;
  }

  .tab-icon {
    position: relative;
    color: #333;
  }

  .badge {
    position: absolute;
    right: -5px;
    bottom: -4px;
  }

  .more {
    margin-left: 8px;
  }

  .dev-end {
    align-self: stretch;
    display: flex;
    gap: 12px;
    margin-left: auto;
    padding: 0 12px 3px 7px;
    border-left: 1px solid #c8c8c8;
    color: #333;
  }

  .toolbar,
  .filter-row {
    flex: none;
    height: 26px;
    display: flex;
    align-items: center;
    border-bottom: 1px solid var(--line);
    color: #3c3c3c;
  }

  .toolbar {
    gap: 12px;
    padding: 0 10px 0 7px;
  }

  label {
    display: flex;
    align-items: center;
    gap: 6px;
    white-space: nowrap;
  }

  .toolbar .next {
    margin-left: -2px;
  }

  .throttle {
    width: 74px;
    appearance: none;
    background: conic-gradient(from -45deg at 50% 100%, #5f5f5f 90deg, transparent 0) 100% 5px / 10px 6px no-repeat;
    background: linear-gradient(#5f5f5f 0 0) 100% 5px / 0 0 no-repeat,
      conic-gradient(from -50deg at 50% 100%, #5f5f5f 100deg, transparent 0) 100% 5px / 11px 7px no-repeat;
  }

  .toolbar .io:last-of-type {
    margin: 0;
  }

  .toolbar .settings {
    margin-left: auto;
  }

  .filter-row {
    gap: 4px;
    padding: 0 4px 0 5px;
  }

  .filter-box {
    flex: 1;
    height: 20px;
    padding-left: 10px;
    border-radius: 10px;
    background: #ecf1fa;
  }

  .filter-box input {
    flex: 1;
    outline: 0;
  }

  .invert {
    margin: 0 6px 0 8px;
  }

  .filter-row .rule {
    background: var(--line);
  }

  .more-filters {
    gap: 8px;
    margin: 0 20px 0 14px;
  }

  .more-filters i {
    border: 5px solid transparent;
    border-top: 7px solid #3c3c3c;
    border-bottom: 0;
  }

  .pill {
    box-sizing: border-box;
    height: 20px;
    padding: 0 4px;
    border: 1px solid #c7c7c7;
    border-radius: 6px;
    color: #1f1f1f;
  }

  .pill.on {
    border-color: #d3d3d3;
    background: #d3d3d3;
  }

  .timeline {
    width: 100%;
    height: auto;
    border-bottom: 1px solid var(--line);
    background: #fff;
    fill: #1f1f1f;
  }

  .split {
    flex: 1;
    min-height: 0;
    display: grid;
    grid-template-columns: 485fr 569fr;
    background: #fff;
  }

  .requests,
  .details {
    min-width: 0;
    min-height: 0;
    display: flex;
    flex-direction: column;
  }

  .scroll-area {
    flex: 1;
    min-height: 0;
    display: flex;
    overflow: hidden;
  }

  table {
    flex: 1;
    min-width: 0;
    align-self: flex-start;
    border-collapse: collapse;
    table-layout: fixed;
  }

  th {
    height: 26px;
    padding: 0 6px;
    border-bottom: 1px solid var(--line);
    background: #f7f7f7;
    font-weight: 400;
    text-align: left;
  }

  td {
    height: 21px;
    padding: 0 0 0 24px;
    position: relative;
    overflow: hidden;
    white-space: nowrap;
  }

  .file {
    position: absolute;
    left: 5px;
    top: 4px;
  }

  tbody tr:nth-child(odd) {
    background: #f8fafe;
  }

  tbody tr.selected {
    background: #dadada;
  }

  .failed {
    color: #b3261e;
  }

  .bar {
    width: 15px;
    display: flex;
    flex-direction: column;
    align-items: center;
    padding: 10px 0;
    box-sizing: border-box;
    background: #fafafa;
  }

  .thumb {
    width: 9px;
    height: 534px;
    margin-top: 8px;
    border-radius: 5px;
    background: #8b8b8b;
  }

  .details .thumb {
    height: 467px;
  }

  .up,
  .down {
    border: 5px solid transparent;
  }

  .up {
    border-top: 0;
    border-bottom: 5px solid #8b8b8b;
  }

  .down {
    margin-top: auto;
    border-top: 5px solid #8b8b8b;
    border-bottom: 0;
  }

  .requests footer {
    flex: none;
    height: 26px;
    display: flex;
    align-items: center;
    gap: 10px;
    padding-left: 11px;
    border-top: 1px solid var(--line);
    color: #474747;
  }

  .details {
    border-left: 1px solid var(--line);
  }

  .detail-tabs {
    flex: none;
    height: 26px;
    display: flex;
    border-bottom: 1px solid var(--line);
    background: #ecf1fa;
    color: #5f5f5f;
  }

  .detail-tabs button {
    margin-top: 2px;
    padding: 3px 10px 0;
    border-bottom: 2px solid transparent;
  }

  .detail-tabs .x {
    padding: 0 8px 0 12px;
  }

  .detail-tabs .active {
    border-color: #0b57d0;
    background: #fff;
    color: #0b57d0;
  }

  .headers {
    flex: 1;
    min-width: 0;
  }

  h2 {
    height: 26px;
    display: flex;
    align-items: center;
    margin: 0;
    border-bottom: 1px solid var(--line);
    background: #f8fafe;
    font-size: 12px;
    font-weight: 400;
  }

  dl + h2 {
    border-top: 1px solid var(--line);
  }

  h2 i {
    margin: 0 5px 0 4px;
    border: 4px solid transparent;
    border-top: 7px solid #1f1f1f;
    border-bottom: 0;
  }

  h2 span {
    width: 164px;
  }

  .headers dl {
    padding: 4px 0 8px;
  }

  .headers dl.request {
    padding: 0;
  }

  .headers dl div {
    display: grid;
    grid-template-columns: 176px 1fr;
    padding: 4px 0 0 7px;
  }

  .headers .response {
    padding: 3px 0 8px;
  }

  .headers .response div {
    min-height: 20px;
  }

  .headers dt {
    color: #474747;
  }

  .headers dd {
    overflow: hidden;
    white-space: pre;
  }

  .ok {
    display: inline-block;
    width: 12px;
    height: 12px;
    margin-right: 5px;
    border-radius: 50%;
    background: #1ea446;
    vertical-align: -2px;
  }

  .drawer {
    flex: none;
    height: 12px;
    display: flex;
    align-items: flex-start;
    overflow: hidden;
    border-top: 1px solid var(--line);
    background: #ecf1fa;
    color: #5f5f5f;
  }

  .drawer button {
    height: 26px;
    margin-top: 2px;
    padding: 0 10px;
  }

  .drawer .active {
    background: #fff;
    color: #0b57d0;
  }

  .drawer .add-tool {
    padding: 0 14px;
  }

  .drawer-end {
    display: flex;
    gap: 12px;
    margin: 6px 11px 0 auto;
    color: #333;
  }
</style>
